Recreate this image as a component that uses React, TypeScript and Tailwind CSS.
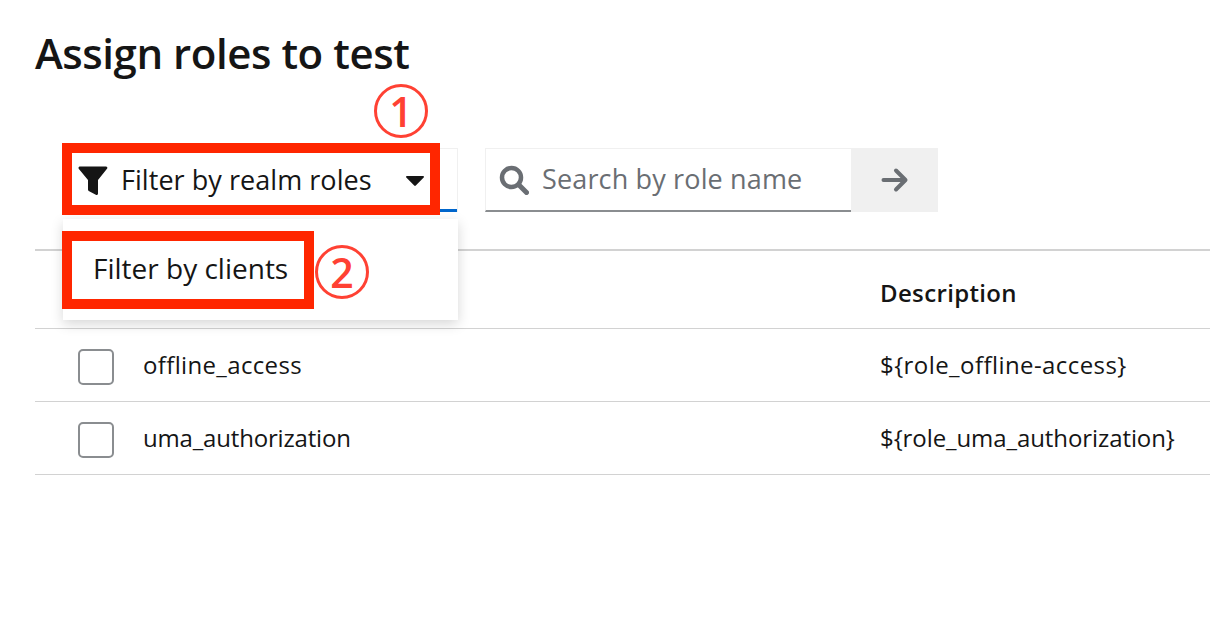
import React from "react";

const font = { fontFamily: '"Open Sans", "Noto Sans", sans-serif' };

function Row({ name, desc, nameClass, descClass }: { name: string; desc: string; nameClass: string; descClass: string }) {
  return (
    <div className="flex h-[73px] items-center border-b border-[#d2d2d2]">
      <div className="ml-[43px] mt-[3px] h-[36px] w-[36px] rounded-[5px] border-2 border-[#8a8d90]" />
      <div className={`ml-[29px] w-[737px] text-[24px] text-[#151515] ${nameClass}`}>{name}</div>
      <div className={`text-[24px] text-[#151515] ${descClass}`}>{desc}</div>
    </div>
  );
}

export default function App() {
  return (
    <div className="relative h-[618px] w-[1210px] overflow-hidden bg-white" style={font}>
      <div className="pl-[35px]">
        <h1 className="pt-[26px] text-[42px] font-semibold leading-[54px] tracking-[-0.45px] text-[#151515]">
          Assign roles to test
        </h1>

        <div className="mt-[68px] flex pl-[28px]">
          <div className="flex h-[64px] w-[395px] items-center border border-b-0 border-[#f0f0f0] shadow-[inset_0_-3px_0_#06c]">
            <svg viewBox="0 0 30 30" className="ml-[14px] h-[30px] w-[30px] fill-[#151515]">
              <path d="M0.5 2C0.5 1 1.2 0.5 2 0.5H28C29 0.5 29.8 1.5 29.2 2.6L20 14V27.5C20 28.8 18.8 29.4 17.8 28.8L11.2 25.2C10.5 24.8 10 24.2 10 23.4V14L0.9 3C0.7 2.8 0.5 2.4 0.5 2Z" />
            </svg>
            <span className="ml-[13px] text-[27px] tracking-[0.05px] text-[#151515]">Filter by realm roles</span>
            <svg viewBox="0 0 18 10" className="ml-[34px] h-[10px] w-[18px] fill-[#151515]">
              <path d="M1 0H17C18 0 18.3 1 17.7 1.6L9.8 9.6C9.4 10 8.6 10 8.2 9.6L0.3 1.6C-0.3 1 0 0 1 0Z" />
            </svg>
          </div>

          <div className="ml-[27px] flex h-[64px] w-[366px] items-center border-b-2 border-[#8a8d90] border-t border-l border-t-[#f0f0f0] border-l-[#f0f0f0]">
            <svg viewBox="0 0 30 30" className="ml-[13px] h-[30px] w-[30px] fill-none stroke-[#6a6e73]">
              <circle cx="12.5" cy="12.5" r="9.5" strokeWidth="4.5" />
              <path d="M19.5 19.5L27.5 27.5" strokeWidth="5" strokeLinecap="round" />
            </svg>
            <span className="ml-[13px] text-[27px] tracking-[0.15px] text-[#6a6e73]">Search by role name</span>
          </div>
          <div className="flex h-[64px] w-[87px] items-center justify-center bg-[#f0f0f0]">
            <svg viewBox="0 0 28 26" className="h-[26px] w-[28px] fill-none stroke-[#6a6e73]" strokeWidth="4" strokeLinecap="round" strokeLinejoin="round">
              <path d="M2.5 13H24M15 3.5L24.5 13L15 22.5" />
            </svg>
          </div>
        </div>

        <div className="mt-[37px] border-t-2 border-[#d2d2d2]">
          <div className="flex h-[78px] items-center border-b border-[#d2d2d2] pl-[845px] pt-[6px] text-[24px] font-semibold tracking-[0.35px] text-[#151515]">
            Description
          </div>
          <Row name="offline_access" desc="${role_offline-access}" nameClass="tracking-[0.35px]" descClass="tracking-[0.43px]" />
          <Row name="uma_authorization" desc="${role_uma_authorization}" nameClass="tracking-[-0.18px]" descClass="tracking-[-0.08px]" />
        </div>
      </div>

      <div className="absolute left-[63px] top-[219px] flex h-[101px] w-[395px] items-center bg-white pb-[4px] pl-[30px] text-[28px] text-[#151515] shadow-[0_4px_12px_rgba(3,3,3,0.16)]">
        Filter by clients
      </div>

      <div className="absolute left-[62px] top-[143px] h-[72px] w-[378px] border-[10px] border-[#ff2600]" />
      <div className="absolute left-[62px] top-[231px] h-[78px] w-[252px] border-[10px] border-[#ff2600]" />

      <div className="absolute left-[374px] top-[84px] flex h-[54px] w-[54px] items-center justify-center rounded-full border-[3px] border-[#ff4133] text-[41px] font-semibold leading-none text-[#ff4133]">
        1
      </div>
      <div className="absolute left-[315px] top-[245px] flex h-[54px] w-[54px] items-center justify-center rounded-full border-[3px] border-[#ff4133] text-[41px] font-semibold leading-none text-[#ff4133]">
        2
      </div>
    </div>
  );
}
